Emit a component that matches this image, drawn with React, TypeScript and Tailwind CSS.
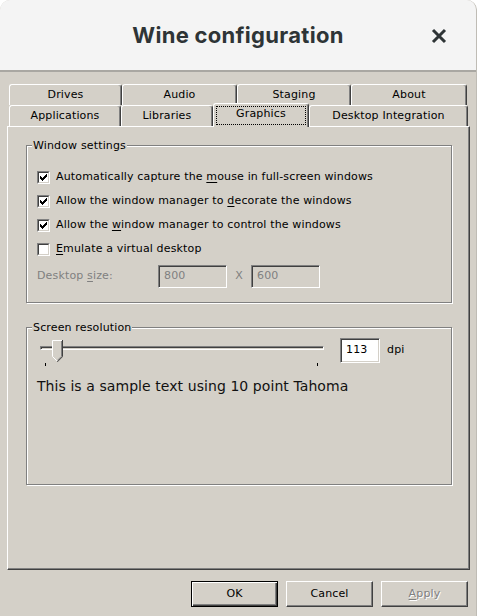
import type { ReactNode } from 'react'

const raised =
  'border border-t-white border-l-white border-r-[#404040] border-b-[#404040] shadow-[inset_-1px_-1px_0_#808080]'
const sunken =
  'border border-t-[#808080] border-l-[#808080] border-r-white border-b-white shadow-[inset_1px_1px_0_#404040,inset_-1px_-1px_0_#d4d0c8]'
const etched = 'border border-[#808080] shadow-[1px_1px_0_white,inset_1px_1px_0_white]'
const tabClass =
  'flex items-center justify-center border-t border-l border-r border-t-white border-l-white border-r-[#404040] shadow-[inset_-1px_0_0_#808080] rounded-t-[3px] bg-[#d4d0c8]'

function Mn({ children }: { children: ReactNode }) {
  return <span className="underline underline-offset-[2px]">{children}</span>
}

function CheckBox({ checked }: { checked: boolean }) {
  return (
    <span className="flex h-[13px] w-[13px] shrink-0 border border-t-[#808080] border-l-[#808080] border-r-white border-b-white">
      <span className="flex h-full w-full items-center justify-center border border-t-[#404040] border-l-[#404040] border-r-[#d4d0c8] border-b-[#d4d0c8] bg-white">
        {checked && (
          <svg width="7" height="7" viewBox="0 0 7 7" shapeRendering="crispEdges">
            <path
              d="M0 2h1v3H0z M1 3h1v3H1z M2 4h1v3H2z M3 3h1v3H3z M4 2h1v3H4z M5 1h1v3H5z M6 0h1v3H6z"
              fill="#000"
            />
          </svg>
        )}
      </span>
    </span>
  )
}

function GroupBox({ label, children, className }: { label: string; children: ReactNode; className?: string }) {
  return (
    <div className={`relative ml-[18px] h-[158px] w-[426px] ${etched} ${className ?? ''}`}>
      <span className="absolute -top-[8px] left-[5px] bg-[#d4d0c8] px-px leading-[15px]">{label}</span>
      {children}
    </div>
  )
}

const options: { label: ReactNode; checked: boolean }[] = [
  { label: <>Automatically capture the <Mn>m</Mn>ouse in full-screen windows</>, checked: true },
  { label: <>Allow the window manager to <Mn>d</Mn>ecorate the windows</>, checked: true },
  { label: <>Allow the <Mn>w</Mn>indow manager to control the windows</>, checked: true },
  { label: <><Mn>E</Mn>mulate a virtual desktop</>, checked: false },
]

const backRow = [
  { name: 'Drives', w: 'w-[113px]' },
  { name: 'Audio', w: 'w-[115px]' },
  { name: 'Staging', w: 'w-[114px]' },
  { name: 'About', w: 'w-[116px]' },
]

export default function App() {
  return (
    <div className="flex h-[616px] w-[477px] flex-col overflow-hidden rounded-t-[10px] border-r border-[#bfbcb5] bg-[#d4d0c8] font-['DejaVu_Sans',sans-serif] text-[11px] tracking-[0.15px] text-black">
      <header className="relative flex h-[72px] shrink-0 items-center justify-center border-b-2 border-[#a9a7a2] bg-[#f4f4f4]">
        <h1 className="font-['Inter',sans-serif] text-[22px] font-bold tracking-[0.3px] text-[#2e3436]">
          Wine configuration
        </h1>
        <button className="absolute right-[29px] top-[28px]" aria-label="Close">
          <svg width="16" height="16" viewBox="0 0 16 16">
            <path d="M2 2L14 14M14 2L2 14" stroke="#2e3436" strokeWidth="3" />
          </svg>
        </button>
      </header>

      <div className="flex flex-1 flex-col px-[7px] pt-[12px]">
        <div className="ml-[2px] flex h-[21px]">
          {backRow.map((t) => (
            <div key={t.name} className={`${tabClass} ${t.w}`}>
              {t.name}
            </div>
          ))}
        </div>
        <div className="ml-[2px] flex h-[21px] items-end">
          <div className={`${tabClass} h-[21px] w-[112px]`}>Applications</div>
          <div className={`${tabClass} h-[21px] w-[92px]`}>Libraries</div>
          <div className={`${tabClass} relative z-10 -mb-px h-[24px] w-[96px] p-[2px]`}>
            <span className="flex h-full w-full items-center justify-center border border-dotted border-black pb-[2px]">
              Graphics
            </span>
          </div>
          <div className={`${tabClass} h-[21px] w-[159px]`}>Desktop Integration</div>
        </div>

        <div className={`h-[444px] w-[463px] pt-[18px] ${raised}`}>
          <GroupBox label="Window settings">
            <div className="flex flex-col pl-[10px] pt-[19px]">
              {options.map((o, i) => (
                <label key={i} className="flex h-[24px] items-center gap-[6px]">
                  <CheckBox checked={o.checked} />
                  <span>{o.label}</span>
                </label>
              ))}
              <div className="mt-[4px] flex h-[23px] items-center text-[#808080]">
                <span className="w-[121px]">
                  Desktop <Mn>s</Mn>ize:
                </span>
                <span className={`flex h-[23px] w-[69px] items-center pl-[5px] ${sunken}`}>800</span>
                <span className="flex w-[24px] justify-center">X</span>
                <span className={`flex h-[23px] w-[69px] items-center pl-[5px] ${sunken}`}>600</span>
              </div>
            </div>
          </GroupBox>

          <GroupBox label="Screen resolution" className="mt-[24px]">
            <div className="flex flex-col pl-[10px] pt-[10px]">
              <div className="flex items-start">
                <div className="relative ml-[3px] h-[30px] w-[284px]">
                  <div className="absolute left-0 right-0 top-[8px] h-[4px] border border-t-[#808080] border-l-[#808080] border-r-white border-b-white shadow-[inset_1px_1px_0_#404040]" />
                  <svg className="absolute left-[12px] top-[2px]" width="11" height="22" viewBox="0 0 11 22">
                    <path d="M0 0H11V16.5L5.5 22L0 16.5Z" fill="#d4d0c8" />
                    <path d="M0.5 16.5V0.5H10" stroke="#fff" fill="none" />
                    <path d="M0.5 16.5L5 21" stroke="#fff" fill="none" />
                    <path d="M10.5 0V16.7L5.3 21.9" stroke="#404040" fill="none" />
                    <path d="M9.5 1V16.3L5.5 20.3" stroke="#808080" fill="none" />
                  </svg>
                  <div className="absolute left-[5px] top-[25px] h-[3px] w-px bg-black" />
                  <div className="absolute left-[277px] top-[25px] h-[3px] w-px bg-black" />
                </div>
                <span className={`ml-[16px] flex h-[25px] w-[40px] items-center bg-white pl-[5px] ${sunken}`}>113</span>
                <span className="ml-[7px] flex h-[25px] items-center">dpi</span>
              </div>
              <p className="mt-[10px] text-[14px] leading-[17px] tracking-[0.07px] text-[#111]">
                This is a sample text using 10 point Tahoma
              </p>
            </div>
          </GroupBox>
        </div>

        <div className="mr-[1px] mt-[11px] flex justify-end gap-[8px]">
          <button className="h-[26px] w-[87px] border border-black shadow-[inset_1px_1px_0_white,inset_-1px_-1px_0_#404040,inset_-2px_-2px_0_#808080]">
            OK
          </button>
          <button className={`h-[26px] w-[87px] ${raised}`}>Cancel</button>
          <button className={`h-[26px] w-[87px] text-[#808080] [text-shadow:1px_1px_0_white] ${raised}`}>
            <Mn>A</Mn>pply
          </button>
        </div>
      </div>
    </div>
  )
}
